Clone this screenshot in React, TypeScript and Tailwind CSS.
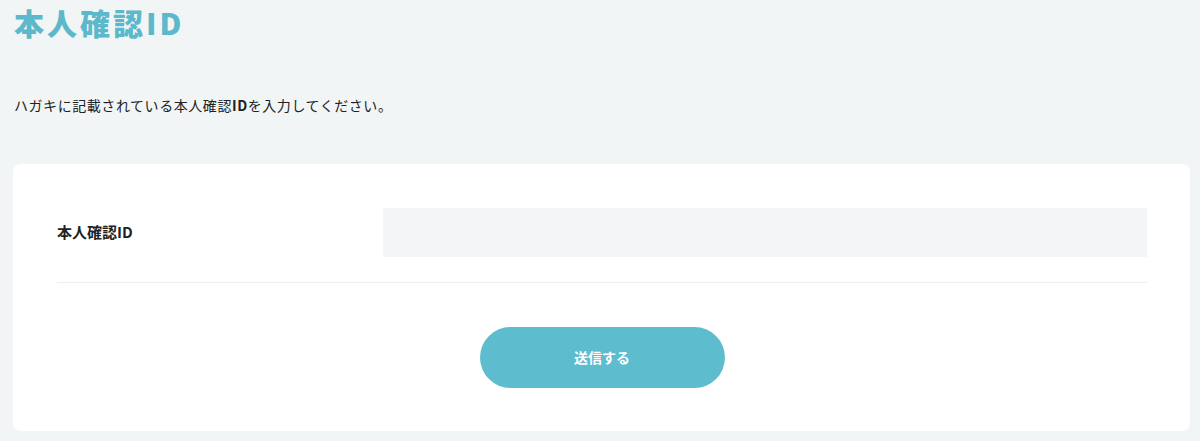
import React from "react";

export default function App() {
  const font = { fontFamily: '"Noto Sans CJK JP", "Noto Sans", sans-serif' };
  return (
    <div
      className="min-h-[441px] w-full bg-[#f1f5f6] pl-[13px] pr-[10px] pb-[9px]"
      style={font}
    >
      <h1 className="pl-[1px] pt-[7px] text-[30px] font-black leading-[30px] tracking-[0.1em] text-[#5cb8cb]">
        本人確認ID
      </h1>
      <p className="mt-[58px] pl-[1px] text-[14px] leading-[20px] tracking-[0.04em] text-[#222]">
        ハガキに記載されている本人確認<span className="font-bold">ID</span>を入力してください。
      </p>
      <div className="mt-[49px] rounded-[8px] bg-white pl-[44px] pr-[43px] pt-[44px] pb-[43px]">
        <div className="flex items-center border-b border-[#eceff0] pb-[25px]">
          <label className="w-[326px] text-[15px] font-bold text-[#222]">本人確認ID</label>
          <input
            type="text"
            className="h-[49px] flex-1 bg-[#f3f5f6] px-4 text-[14px] outline-none"
          />
        </div>
        <div className="mt-[44px] flex justify-center">
          <button className="h-[61px] w-[245px] rounded-full bg-[#5ebccf] text-[14px] font-bold text-white">
            送信する
          </button>
        </div>
      </div>
    </div>
  );
}
